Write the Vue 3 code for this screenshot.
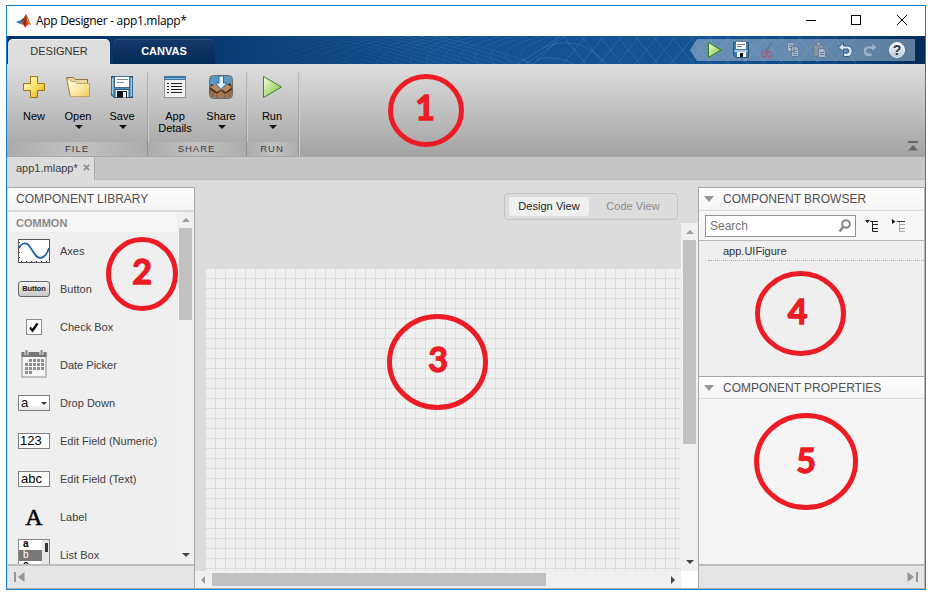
<script setup>
const fileTools = [
  { id: 'new', label: 'New', arrow: false },
  { id: 'open', label: 'Open', arrow: true },
  { id: 'save', label: 'Save', arrow: true },
]
const components = [
  { id: 'axes', label: 'Axes' },
  { id: 'button', label: 'Button' },
  { id: 'check', label: 'Check Box' },
  { id: 'date', label: 'Date Picker' },
  { id: 'drop', label: 'Drop Down' },
  { id: 'num', label: 'Edit Field (Numeric)' },
  { id: 'text', label: 'Edit Field (Text)' },
  { id: 'label', label: 'Label' },
  { id: 'list', label: 'List Box' },
]
const marks = [
  { n: 1, cx: 426, cy: 110.5, rx: 35.5, ry: 34, tx: 425, ty: 120 },
  { n: 2, cx: 142, cy: 274, rx: 33.5, ry: 34.5, tx: 142, ty: 284 },
  { n: 3, cx: 437.5, cy: 362, rx: 48, ry: 45.5, tx: 438, ty: 372 },
  { n: 4, cx: 800.5, cy: 313.5, rx: 43, ry: 40, tx: 797.5, ty: 324 },
  { n: 5, cx: 806, cy: 461.5, rx: 49.5, ry: 46, tx: 806, ty: 473 },
]
// mesh decoration of the blue header
const mesh = []
for (let i = 0; i < 30; i++) {
  mesh.push(`M${20 + i * 14} 0 Q${80 + i * 14} 12 ${150 + i * 13} 28`)
  mesh.push(`M${170 + i * 13} 0 Q${90 + i * 14} 14 ${30 + i * 17} 28`)
}
const lattice = []
for (let i = 0; i < 16; i++) {
  lattice.push(`M${556 + i * 18} 0 L${579 + i * 18} 28`)
  lattice.push(`M${579 + i * 18} 0 L${556 + i * 18} 28`)
}
const dateCells = []
for (let r = 0; r < 4; r++)
  for (let c = 0; c < 5; c++)
    if (!(r === 0 && c === 0) && !(r === 3 && c > 1)) dateCells.push({ x: 4 + c * 4, y: 9 + r * 4 })
</script>

<template>
  <div class="page">
    <div class="window">
      <header class="titlebar">
        <svg class="logo" width="16" height="14" viewBox="0 0 16 14">
          <path d="M0 8 L5 6 L7 8 L4 10Z" fill="#2c78b4" />
          <path d="M5 6 L7.500 4 L10 0 L8.500 6 L7 9Z" fill="#4b4561" />
          <path d="M10 0 C11.500 1 13 8 15.500 11 C13 9.500 12 10 9 14 C8 11 7 10 4 10 C7 9 8.500 4 10 0Z" fill="#d6481f" />
          <path d="M10 1 C11 3 10.500 7 9 13 C8.500 11 8 10 7 9.500 C8.500 7 9.500 4 10 1Z" fill="#8e2417" />
          <path d="M10.500 2 C12 6 13 8 14.500 10 C12 9 11 8 10.500 2Z" fill="#f1952f" />
        </svg>
        <span class="title">App Designer - app1.mlapp*</span>
        <svg class="winbtns" width="104" height="14" viewBox="0 0 104 14" fill="none" stroke="#000" stroke-width="1">
          <path d="M0 7.500 H10" />
          <rect x="45.500" y="2.500" width="9" height="9" />
          <path d="M91 2 L101 12 M101 2 L91 12" />
        </svg>
      </header>

      <div class="ribbon">
        <svg class="mesh" width="918" height="28" viewBox="0 0 918 28" fill="none">
          <g stroke="#6fa3d2" stroke-width="0.8" stroke-opacity="0.22"><path v-for="d in mesh" :key="d" :d="d" /></g>
          <g stroke="#7fb0dc" stroke-width="0.9" stroke-opacity="0.25">
            <path v-for="d in lattice" :key="d" :d="d" />
            <path d="M510 28 Q532 16 553 0 M518 28 Q538 16 558 0 M526 28 Q540 18 552 0 M536 12 Q570 -4 600 28 M530 23 Q552 19 566 28" />
          </g>
        </svg>
        <div class="tab active">DESIGNER</div>
        <div class="tab">CANVAS</div>
        <div class="quick">
          <svg width="225" height="22" viewBox="0 0 225 22">
            <defs>
              <linearGradient id="green" x1="0" y1="0" x2="1" y2="1"><stop offset="0" stop-color="#f4ffe0" /><stop offset="1" stop-color="#79bf31" /></linearGradient>
              <linearGradient id="help" x1="0" y1="0" x2="0" y2="1"><stop offset="0" stop-color="#fff" /><stop offset="1" stop-color="#b9c6d2" /></linearGradient>
            </defs>
            <path d="M0 11 L7 0 H225 V22 H7Z" fill="#b9c9d8" fill-opacity=".5" />
            <path d="M18.500 3.500 V18.500 L31 11Z" fill="url(#green)" stroke="#2e7d1a" />
            <g transform="translate(43 3)">
              <path d="M.5 .5 H15.500 V15.500 H3 L.5 13Z" fill="#3c80ad" stroke="#235577" />
              <rect x="3" y="0" width="10" height="7" fill="#fff" /><path d="M4 2.500 H12 M4 4.500 H9" stroke="#6d7d8c" />
              <rect x="1.500" y="8" width="13" height="2" fill="#a9c8dd" /><rect x="4" y="10" width="9" height="5" fill="#fff" /><rect x="7" y="11" width="3" height="4" fill="#111" />
            </g>
            <g fill="none"><path d="M81 4 L76 14 M75.500 9 L77.500 13" stroke="#5f7388" stroke-width="1.300" /><g stroke="#a8607c" stroke-width="1.500"><ellipse cx="74" cy="15.500" rx="2" ry="2.700" /><ellipse cx="79.500" cy="15.500" rx="2" ry="2.700" /></g></g>
            <g stroke="#647f9b" fill="#a9b9c8">
              <path d="M97.500 3.500 H104 V12.500 H97.500Z M101.500 7.500 H106 L108.500 10 V17.500 H101.500Z" />
              <path d="M99 6 H103 M99 8.500 H101 M103 11.500 H107 M103 13.500 H107 M103 15.500 H107" />
              <path d="M123.500 5.500 H133.500 V17.500 H123.500Z" fill="#8a929a" /><path d="M126.500 3.500 H130.500 V6 H126.500Z" />
              <path d="M128.500 9.500 H133 L135.500 12 V18.500 H128.500Z" /><path d="M130 13.500 H134 M130 15.500 H134" />
            </g>
            <path d="M153.500 4 L148.500 8.500 L153.500 12.500 V10 H158 Q160 12 158 14 H153.500 V17.500 H159 Q163 15.500 162 10 Q160.500 7 158 7 H153.500Z" fill="#dbe8f4" stroke="#315e87" />
            <path d="M182 4 L187 8.500 L182 12.500 V10 H177.500 Q175.500 12 177.500 14 H182 V17.500 H176.500 Q172.500 15.500 173.500 10 Q175 7 177.500 7 H182Z" fill="#9db3c8" stroke="#607f9e" stroke-opacity=".8" />
            <circle cx="207" cy="11" r="7.500" fill="url(#help)" stroke="#e9f0f5" />
            <text x="207" y="16" text-anchor="middle" font-size="14" font-weight="bold" font-family="Liberation Sans, sans-serif" fill="#28384a">?</text>
          </svg>
        </div>
      </div>

      <div class="toolstrip">
        <section class="group file">
          <div class="tools">
            <div v-for="t in fileTools" :key="t.id" class="tool">
              <svg v-if="t.id === 'new'" width="24" height="24" viewBox="0 0 24 24">
                <defs><linearGradient id="gold" x1="0" y1="0" x2="1" y2="1"><stop offset="0" stop-color="#fffbd7" /><stop offset=".5" stop-color="#fbe46c" /><stop offset="1" stop-color="#d9a30d" /></linearGradient></defs>
                <path d="M8.500 1.500 H15.500 V8.500 H22.500 V15.500 H15.500 V22.500 H8.500 V15.500 H1.500 V8.500 H8.500Z" fill="url(#gold)" stroke="#a37412" />
              </svg>
              <svg v-else-if="t.id === 'open'" width="24" height="24" viewBox="0 0 24 24">
                <defs><linearGradient id="folder" x1="0" y1="0" x2="1" y2="1"><stop offset="0" stop-color="#fffbe4" /><stop offset=".5" stop-color="#fbeeb4" /><stop offset="1" stop-color="#ecc65c" /></linearGradient></defs>
                <path d="M.5 2.500 H7.500 L9.500 4.500 H21.500 V20.500 H4Z" fill="#e9d6a4" stroke="#8f7440" />
                <path d="M.8 3 L4.500 21.500 H23.500 V8.500 H11 L9 6.500 H5.500Z" fill="url(#folder)" stroke="#b98f45" stroke-width=".7" />
              </svg>
              <svg v-else width="24" height="24" viewBox="0 0 24 24">
                <path d="M1.500 1.500 H22.500 V22.500 H4 L1.500 20Z" fill="#4591c1" stroke="#1c4a6b" />
                <path d="M2.500 3 V19 M21.500 3 V21" stroke="#9dcbea" stroke-width="1.500" />
                <rect x="4.500" y="1.500" width="15" height="11" fill="#fff" stroke="#416d8b" /><path d="M7 4.500 H18 M7 7.500 H14" stroke="#7d8894" />
                <rect x="5" y="14.500" width="14" height="8" fill="#e9eef2" stroke="#315774" /><rect x="7" y="16" width="10" height="6.500" fill="#14181d" /><rect x="13" y="17" width="3" height="5.500" fill="#eee" />
              </svg>
              <span>{{ t.label }}</span>
              <i v-if="t.arrow" class="caret"></i>
            </div>
          </div>
          <div class="caption">FILE</div>
        </section>
        <section class="group share">
          <div class="tools">
            <div class="tool">
              <svg width="24" height="24" viewBox="0 0 24 24">
                <rect x="1.500" y="1.500" width="21" height="21" fill="#f2f2f2" stroke="#8b9298" /><rect x="1" y="1" width="22" height="4" fill="#3978a7" /><path d="M2 3.500 H22" stroke="#7eb5d8" />
                <path d="M4 8.500 H6 M4 11.500 H6 M4 14.500 H6 M4 17.500 H6 M8 8.500 H19 M8 11.500 H19 M8 14.500 H19 M8 17.500 H19" stroke="#222" stroke-width="1.200" />
              </svg>
              <span>App<br />Details</span>
            </div>
            <div class="tool">
              <svg width="26" height="24" viewBox="0 0 26 24">
                <rect x="1.500" y=".5" width="23" height="23" rx="4" fill="#5b98c3" stroke="#75685f" />
                <path d="M3 9 L2 13 L3 22 H23 L24 12 L22 8 L17 11 L13 15 L9 11Z" fill="#4d301c" />
                <path d="M2 12 L8 9 L14 14 L9 17Z M24 12 L18 9 L13 14 L18 17Z" fill="#b58a63" />
                <path d="M2.500 15 L9 19 L13 15.500 L17 19 L23.500 15 V20 Q23.500 22.500 21 22.500 H5 Q2.500 22.500 2.500 20Z" fill="#a6764e" /><path d="M5 17 V22 M9 20 V23 M17 20 V23 M21 17 V22" stroke="#7d5432" />
                <path d="M11 1 H15.500 V8 H19 L13 14.500 L7.500 8 H11Z" fill="#d8f0ff" stroke="#316b98" />
              </svg>
              <span>Share</span><i class="caret"></i>
            </div>
          </div>
          <div class="caption">SHARE</div>
        </section>
        <section class="group run">
          <div class="tools">
            <div class="tool">
              <svg width="24" height="24" viewBox="0 0 24 24"><path d="M3.500 1.500 V22.500 L21.500 12Z" fill="url(#green)" stroke="#39852a" /></svg>
              <span>Run</span><i class="caret"></i>
            </div>
          </div>
          <div class="caption">RUN</div>
        </section>
        <svg class="collapse" width="10" height="10" viewBox="0 0 10 10" fill="#666"><path d="M0 0 H10 V2 H0Z M5 4 L10 9.500 H0Z" /></svg>
      </div>

      <div class="doctabs"><div class="doctab">app1.mlapp*<svg width="7" height="7" viewBox="0 0 8 8" stroke="#909090" stroke-width="2"><path d="M1 1 L7 7 M7 1 L1 7" /></svg></div></div>

      <main class="workspace">
        <aside class="library">
          <h2 class="heading">COMPONENT LIBRARY</h2>
          <div class="libbody">
            <div class="list">
              <h3>COMMON</h3>
              <div v-for="c in components" :key="c.id" class="item">
                <span class="pic">
                  <svg v-if="c.id === 'axes'" width="32" height="24" viewBox="0 0 32 24">
                    <rect x=".5" y=".5" width="31" height="23" fill="#fff" stroke="#555" />
                    <path d="M1 9 C4 3 9 3 12 8 C17 15 18 19 22 19 C26 19 29 15 31 9" fill="none" stroke="#2464a5" stroke-width="1.800" />
                    <path d="M3 22.500 H31" stroke="#333" stroke-dasharray="1 4" /><path d="M1.500 3 V22" stroke="#333" stroke-dasharray="1 4" />
                  </svg>
                  <b v-else-if="c.id === 'button'" class="picbtn">Button</b>
                  <svg v-else-if="c.id === 'check'" width="16" height="16" viewBox="0 0 16 16"><rect x=".5" y=".5" width="15" height="15" fill="#fff" stroke="#8c8c8c" /><path d="M4 8.500 L6.500 11.500 L11.500 4.500" fill="none" stroke="#000" stroke-width="2.300" /></svg>
                  <svg v-else-if="c.id === 'date'" class="cal" width="26" height="28" viewBox="0 0 26 28">
                    <rect x="1" y="4" width="24" height="23" fill="#f8f8f8" stroke="#8b8b8b" /><rect x="0.500" y="2" width="25" height="5" fill="#777" />
                    <path d="M5.500 0 V5 M20.500 0 V5" stroke="#efefef" stroke-width="4" /><path d="M5.500 0 V5 M20.500 0 V5" stroke="#888" stroke-width="2" />
                    <rect v-for="d in dateCells" :key="d.x + '-' + d.y" :x="d.x" :y="d.y" width="3" height="3" fill="#8f8f8f" />
                  </svg>
                  <span v-else-if="c.id === 'drop'" class="field dd">a<i class="mini"></i></span>
                  <span v-else-if="c.id === 'num'" class="field num">123</span>
                  <span v-else-if="c.id === 'text'" class="field">abc</span>
                  <span v-else-if="c.id === 'label'" class="serif">A</span>
                  <span v-else class="listpic"><em>a</em><em class="sel">b</em><em>c</em></span>
                </span>
                <span>{{ c.label }}</span>
              </div>
            </div>
            <div class="vscroll lib"><i class="up"></i><div class="thumb"></div><i class="down"></i></div>
          </div>
          <footer class="foot"><svg width="11" height="10" viewBox="0 0 11 10" fill="#959595"><path d="M0 0 H2 V10 H0Z M10.500 0 V10 L4 5Z" /></svg></footer>
        </aside>

        <section class="center">
          <div class="design">
            <div class="view">
              <div class="toggle"><span class="on">Design View</span><span>Code View</span></div>
              <div class="grid"></div>
            </div>
            <div class="vscroll"><i class="up"></i><div class="thumb"></div><i class="down"></i></div>
          </div>
          <div class="bottom"><div class="hscroll"><i class="left"></i><div class="thumb"></div><i class="right"></i></div></div>
        </section>

        <aside class="inspector">
          <h2 class="heading"><i class="fold"></i>COMPONENT BROWSER</h2>
          <div class="searchrow">
            <div class="search">Search<svg width="14" height="14" viewBox="0 0 14 14" fill="none" stroke="#888"><circle cx="8" cy="5" r="3.800" stroke-width="2" /><path d="M5 8 L1.500 12.500" stroke-width="2.400" /></svg></div>
            <svg class="tree" width="42" height="14" viewBox="0 0 42 14">
              <path d="M0 1 H5 L2.500 4Z M27 0 V5 L30.500 2.500Z" fill="#111" />
              <path d="M5 2.500 H13 M7.500 3 V12.500 H13 M7.500 5.500 H13 M7.500 9.500 H13" fill="none" stroke="#222" />
              <path d="M32 2.500 H40" stroke="#333" /><path d="M34.500 3 V12.500 H40 M34.500 5.500 H40 M34.500 9.500 H40" fill="none" stroke="#aaa" />
            </svg>
          </div>
          <div class="browser"><div class="node">app.UIFigure</div></div>
          <h2 class="heading second"><i class="fold"></i>COMPONENT PROPERTIES</h2>
          <div class="props"></div>
          <footer class="foot end"><svg width="11" height="10" viewBox="0 0 11 10" fill="#959595"><path d="M9 0 H11 V10 H9Z M.5 0 V10 L7 5Z" /></svg></footer>
        </aside>
      </main>
    </div>

    <svg class="marks" width="935" height="596" viewBox="0 0 935 596">
      <g v-for="m in marks" :key="m.n">
        <ellipse :cx="m.cx" :cy="m.cy" :rx="m.rx" :ry="m.ry" fill="none" stroke="#ed1c24" stroke-width="5" />
        <text :x="m.tx" :y="m.ty" text-anchor="middle">{{ m.n }}</text>
      </g>
    </svg>
  </div>
</template>

<style>
body { background: #fff; }
</style>

<style scoped>
* { box-sizing: border-box; }
.page { position: relative; width: 935px; height: 596px; padding: 5px 9px 6px 6px; overflow: hidden; background: #fff; font-family: "Liberation Sans", Arial, sans-serif; font-size: 11px; color: #404040; white-space: nowrap; }
.window { width: 920px; height: 585px; border: 1px solid #1c80d0; display: flex; flex-direction: column; }
svg { display: block; flex: none; }
.titlebar { height: 30px; display: flex; align-items: center; padding: 0 17px 0 9px; color: #000; }
.title { font: 12px "Open Sans", "Noto Sans", sans-serif; margin: -2px 0 0 4px; letter-spacing: -0.31px; }
.winbtns { margin-left: auto; margin-right: -2px; margin-top: -2px; }
.ribbon { position: relative; height: 28px; display: flex; align-items: flex-end; padding: 0 10px 0 1px; background: linear-gradient(90deg, #03336b 0, #063870 20%, #0d457f 35%, #135292 50%, #145493 75%, #114a87 86%, #03376c 96%, #022a56 100%); }
.mesh { position: absolute; left: 0; top: 0; -webkit-mask-image: linear-gradient(90deg, transparent 22%, #000 50%); mask-image: linear-gradient(90deg, transparent 22%, #000 50%); }
.tab { position: relative; width: 102px; height: 25px; margin-left: 3px; border-radius: 5px 5px 0 0; border-top: 1px solid #31537d; background: linear-gradient(#15386a, #032a58); color: #fff; font-weight: bold; line-height: 23px; text-align: center; font-size: 11px; }
.tab.active { margin-left: 0; background: #dedede; border-color: #f5f5f5; color: #333; font-weight: normal; }
.quick { position: relative; margin-left: auto; height: 25px; }
.toolstrip { height: 93px; display: flex; align-items: stretch; position: relative; background: linear-gradient(#dedede, #a3a3a3); border-bottom: 1px solid #a6a6a6; padding-left: 1px; }
.group { display: flex; flex-direction: column; position: relative; }
.group::after { content: ""; position: absolute; right: 0; top: 8px; bottom: 0; width: 1px; background: linear-gradient(#b8b8b8, #8e8e8e); box-shadow: 1px 0 #cfcfcf; }
.file { width: 140px; }
.share { width: 99px; }
.run { width: 52px; }
.tools { display: flex; flex: 1; padding: 11px 0 0 4px; }
.tool { width: 44px; display: flex; flex-direction: column; align-items: center; color: #000; line-height: 12px; text-align: center; }
.tool span { margin-top: 11px; }
.share .tools { padding-left: 4px; }
.share .tool { width: 46px; }
.run .tools { padding-left: 3px; }
.caret { border: 4px solid transparent; border-top-color: #111; border-bottom: 0; margin: 3px 0 0 2px; }
.caption { height: 14px; line-height: 14px; padding-right: 2px; text-align: center; font-size: 9.500px; letter-spacing: 1px; color: #3c3c3c; background: linear-gradient(90deg, #acacac, #c2c2c2 50%, #acacac); }
.collapse { position: absolute; right: 7px; bottom: 5px; }
.doctabs { height: 23px; background: #c6c6c6; border-bottom: 1px solid #bababa; flex: none; }
.doctab { width: 88px; height: 23px; padding-left: 9px; background: #dcdcdc; border-right: 1px solid #aaa; display: flex; align-items: center; padding-bottom: 2px; gap: 5px; }
.workspace { flex: 1; min-height: 0; background: #dcdcdc; display: flex; align-items: stretch; border-bottom: 1px solid #b0b0b0; }
.library { width: 188px; margin-top: 7px; display: flex; flex-direction: column; border: 1px solid #a6a6a6; border-width: 1px 1px 0 0; padding-left: 1px; }
.heading { flex: none; height: 24px; margin: 0; padding-left: 8px; display: flex; align-items: center; font-size: 12px; font-weight: normal; letter-spacing: 0; color: #505050; background: linear-gradient(#fff, #f4f4f4); border-bottom: 2px solid #dadada; }
.libbody { flex: 1; min-height: 0; display: flex; background: #efefef; }
.list { flex: 1; overflow: hidden; }
.list h3 { margin: 0; height: 20px; padding-left: 8px; line-height: 22px; font-size: 11px; font-weight: bold; color: #8a8a8a; background: #f6f6f6; }
.item { height: 38px; display: flex; align-items: center; gap: 10px; padding-left: 10px; }
.pic { width: 32px; display: flex; justify-content: center; color: #000; }
.picbtn { width: 32px; height: 16px; border: 1px solid #666; border-radius: 3px; background: linear-gradient(#f3f3f3, #c8c8c8); font-size: 7.500px; letter-spacing: -.1px; line-height: 14px; text-align: center; color: #222; }
.cal { margin: -2px 1px 0 0; }
.field { width: 32px; height: 16px; border: 1px solid #808080; background: #fff; font-size: 13px; line-height: 14px; padding-left: 2px; }
.num { padding-left: 1px; }
.dd { display: flex; justify-content: space-between; align-items: center; padding-right: 2px; background: linear-gradient(#fff 60%, #e4e4e4); }
.mini { border: 3px solid transparent; border-top-color: #333; border-bottom: 0; }
.serif { font: 24px "Liberation Serif", serif; -webkit-text-stroke: .5px #000; }
.listpic { width: 32px; height: 32px; border: 1px solid #888; display: flex; flex-direction: column; background: linear-gradient(#333, #333) 26px 3px / 3px 9px no-repeat, linear-gradient(90deg, #fff 23px, #e5e5e5 23px); }
.listpic em { flex: none; width: 23px; height: 10px; line-height: 8px; font-size: 10px; font-style: normal; font-weight: bold; padding-left: 4px; }
.listpic .sel { height: 11px; line-height: 10px; background: #777; color: #fff; font-weight: normal; }
.foot { flex: none; height: 24px; border-top: 2px solid #bdbdbd; background: #e5e5e5; display: flex; align-items: center; padding: 0 6px; }
.end { justify-content: flex-end; }
.vscroll { width: 17px; display: flex; flex-direction: column; align-items: center; background: #f0f0f0; flex: none; }
.vscroll .thumb { width: 13px; height: 204px; background: #c1c1c1; }
.lib .thumb { height: 92px; }
.up { border: 4px solid transparent; border-bottom-color: #9c9c9c; border-top: 0; margin: 7px 0 6px; }
.lib .up { margin: 6px 0; }
.down { border: 4px solid transparent; border-top-color: #444; border-bottom: 0; margin: auto 0 7px; }
.center { width: 503px; display: flex; flex-direction: column; }
.design { flex: 1; display: flex; min-height: 0; }
.design .vscroll { margin-top: 43px; }
.view { width: 486px; display: flex; flex-direction: column; padding-top: 13px; }
.toggle { align-self: flex-end; width: 174px; height: 27px; margin-right: 3px; padding: 3px 0 3px 4px; display: flex; align-items: center; border: 1px solid #c3c3c3; border-radius: 4px; color: #8b8b8b; letter-spacing: .05px; }
.toggle span { flex: 1; text-align: center; line-height: 19px; }
.toggle .on { flex: none; width: 80px; background: #f0f0f0; border-radius: 3px; color: #222; }
.grid { flex: 1; margin: 48px 0 0 10px; background-color: #f0f0f0; background-image: linear-gradient(90deg, #dcdcdc 1px, transparent 1px), linear-gradient(#dcdcdc 1px, transparent 1px); background-size: 10px 10px; }
.bottom { height: 17px; display: flex; background: #fff; }
.hscroll { width: 486px; display: flex; align-items: center; background: #f0f0f0; }
.hscroll .thumb { width: 334px; height: 13px; background: #c1c1c1; }
.left { border: 4px solid transparent; border-right-color: #9c9c9c; border-left: 0; margin: 0 7px 0 6px; }
.right { border: 4px solid transparent; border-left-color: #444; border-right: 0; margin: 0 6px 0 auto; }
.inspector { width: 227px; margin-top: 7px; display: flex; flex-direction: column; border: 1px solid #a6a6a6; border-right-color: #bbb; border-bottom: 0; }
.inspector .heading { padding-left: 5px; border-bottom-width: 1px; height: 23px; }
.fold { border: 5px solid transparent; border-top: 6px solid #979797; border-bottom: 0; margin-right: 9px; }
.searchrow { height: 30px; border-bottom: 1px solid #b8b8b8; background: #f7f7f7; display: flex; align-items: center; padding-left: 6px; }
.search { width: 151px; height: 22px; border: 1px solid #929292; background: #fff; display: flex; align-items: center; justify-content: space-between; padding: 0 3px 0 4px; font-size: 12px; color: #747474; }
.tree { margin-left: 9px; }
.browser { height: 135px; background: #efefef; padding-left: 9px; }
.node { height: 20px; line-height: 21px; padding-left: 15px; border-bottom: 1px dotted #aaa; color: #333; }
.inspector .second { border-top: 1px solid #a6a6a6; }
.props { flex: 1; background: #f5f5f5; }
.marks { position: absolute; left: 0; top: 0; }
.marks text { font: bold 34px Lato, sans-serif; fill: #ed1c24; stroke: #ed1c24; stroke-width: 1.300px; }
</style>
